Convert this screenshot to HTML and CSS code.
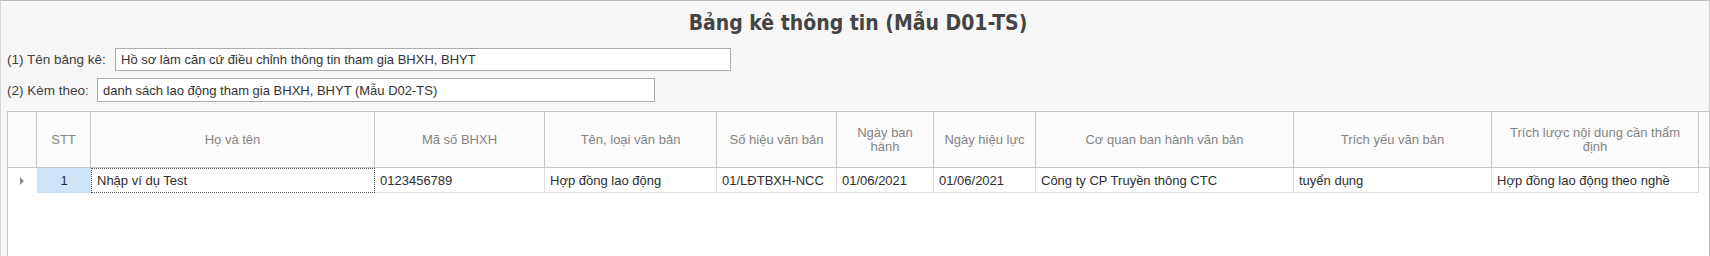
FILE: index.html
```html
<!DOCTYPE html>
<html lang="vi">
<head>
<meta charset="utf-8">
<title>Bảng kê thông tin (Mẫu D01-TS)</title>
<link rel="stylesheet" href="styles.css">
</head>
<body>
<div class="panel">
  <div class="title">Bảng kê thông tin (Mẫu D01-TS)</div>
  <div class="field field-1">
    <span class="label">(1) Tên bảng kê:</span>
    <div class="input input-1">Hồ sơ làm căn cứ điều chỉnh thông tin tham gia BHXH, BHYT</div>
  </div>
  <div class="field field-2">
    <span class="label">(2) Kèm theo:</span>
    <div class="input input-2">danh sách lao động tham gia BHXH, BHYT (Mẫu D02-TS)</div>
  </div>
  <div class="grid">
    <div class="hrow">
      <div class="hc"></div>
      <div class="hc">STT</div>
      <div class="hc">Họ và tên</div>
      <div class="hc">Mã số BHXH</div>
      <div class="hc">Tên, loại văn bản</div>
      <div class="hc">Số hiệu văn bản</div>
      <div class="hc">Ngày ban<br>hành</div>
      <div class="hc">Ngày hiệu lực</div>
      <div class="hc">Cơ quan ban hành văn bản</div>
      <div class="hc">Trích yếu văn bản</div>
      <div class="hc">Trích lược nội dung cần thẩm<br>định</div>
      <div class="hc hc-last"></div>
    </div>
    <div class="drow">
      <div class="dc ind"><span class="tri"></span></div>
      <div class="dc stt">1</div>
      <div class="dc focus">Nhập ví dụ Test</div>
      <div class="dc">0123456789</div>
      <div class="dc">Hợp đồng lao động</div>
      <div class="dc">01/LĐTBXH-NCC</div>
      <div class="dc">01/06/2021</div>
      <div class="dc">01/06/2021</div>
      <div class="dc">Công ty CP Truyền thông CTC</div>
      <div class="dc">tuyển dụng</div>
      <div class="dc">Hợp đồng lao động theo nghề</div>
    </div>
  </div>
</div>
</body>
</html>
```

FILE: styles.css
```css
* { box-sizing: border-box; }
html, body { margin: 0; padding: 0; }
body {
  width: 1710px;
  height: 256px;
  overflow: hidden;
  background: #f7f7f7;
  font-family: "Liberation Sans", Arial, sans-serif;
  font-size: 13px;
  color: #3a3a3a;
}
.panel {
  width: 1710px;
  height: 256px;
  border-top: 1px solid #bdbdbd;
  border-left: 1px solid #d6d6d6;
  border-right: 1px solid #c9c9c9;
  background: #f7f7f7;
  padding-left: 6px;
  overflow: hidden;
}
.title {
  height: 47px;
  padding-top: 9px;
  text-align: center;
  font-family: "DejaVu Sans", sans-serif;
  font-stretch: condensed;
  font-weight: bold;
  font-size: 21px;
  line-height: 26px;
  color: #444444;
}
.field {
  display: flex;
  align-items: center;
  height: 23px;
}
.field-2 { margin-top: 7px; height: 24px; }
.label {
  color: #404040;
  white-space: nowrap;
  font-size: 13.5px;
}
.field-1 .label { width: 108px; }
.field-2 .label { width: 90px; }
.input {
  height: 100%;
  background: #ffffff;
  border: 1px solid #acacac;
  padding: 0 5px;
  display: flex;
  align-items: center;
  color: #333333;
  white-space: nowrap;
}
.input-1 { width: 616px; }
.input-2 { width: 558px; }
.grid {
  margin-top: 9px;
  width: 1702px;
  height: 200px;
  background: #ffffff;
  border-top: 1px solid #c4c4c4;
  border-left: 1px solid #c4c4c4;
}
.hrow, .drow {
  display: grid;
  grid-template-columns: 29px 54px 284px 170px 172px 120px 97px 102px 258px 198px 207px 10px;
}
.hrow { height: 56px; }
.hc {
  display: flex;
  align-items: center;
  justify-content: center;
  text-align: center;
  background: #fbfbfb;
  border-right: 1px solid #c8c8c8;
  border-bottom: 1px solid #c8c8c8;
  color: #858585;
  line-height: 14px;
}
.hc-last { border-right: none; }
.drow { height: 25px; }
.dc {
  display: flex;
  align-items: center;
  padding-left: 5px;
  border-right: 1px solid #dcdcdc;
  border-bottom: 1px solid #dcdcdc;
  color: #2e2e2e;
  white-space: nowrap;
  overflow: hidden;
}
.dc.ind {
  border: none;
  padding-left: 12px;
}
.tri {
  width: 0;
  height: 0;
  border-top: 4px solid transparent;
  border-bottom: 4px solid transparent;
  border-left: 4px solid #8c8c8c;
}
.dc.stt {
  justify-content: center;
  padding-left: 0;
  background: #cde4f7;
  border-right: none;
  border-bottom: 1px solid #c8dcec;
}
.dc.focus {
  border: 1px dotted #555555;
}
```
